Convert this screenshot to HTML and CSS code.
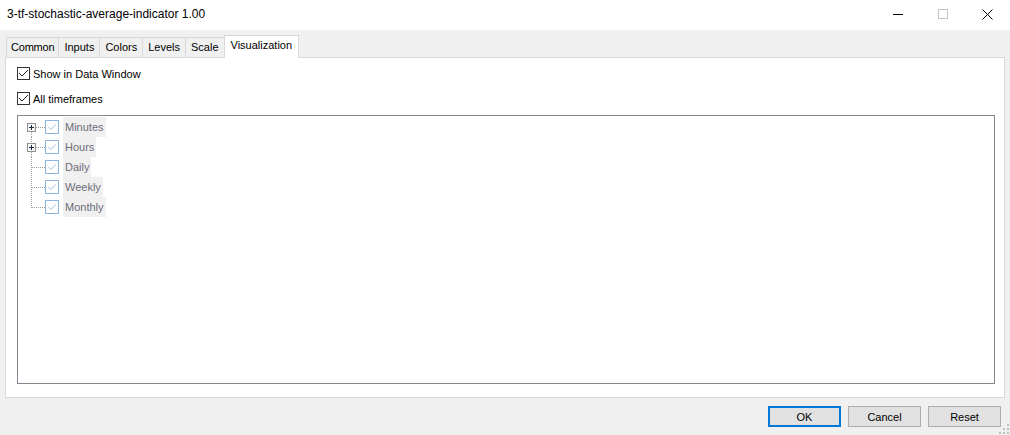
FILE: index.html
```html
<!DOCTYPE html>
<html>
  <head>
    <meta charset="UTF-8" />
    <title>3-tf-stochastic-average-indicator 1.00</title>
    <link rel="stylesheet" href="styles.css">
  </head>
  <body>
    <div class="window">
      <header class="titlebar">
        <span class="title">3-tf-stochastic-average-indicator 1.00</span>
        <div class="controls">
          <span class="ctl">
            <svg width="10" height="10" viewBox="0 0 10 10"><path d="M0 5.5H10" stroke="#000" /></svg>
          </span>
          <span class="ctl">
            <svg width="10" height="10" viewBox="0 0 10 10"><rect x="0.5" y="0.5" width="9" height="9" fill="none" stroke="#c4c4c4" /></svg>
          </span>
          <span class="ctl">
            <svg width="11" height="11" viewBox="0 0 11 11"><path d="M0.5 0.5L10.5 10.5M10.5 0.5L0.5 10.5" stroke="#000" stroke-width="1" /></svg>
          </span>
        </div>
      </header>

      <nav class="tabs">
        <div class="tab">Common</div>
        <div class="tab">Inputs</div>
        <div class="tab">Colors</div>
        <div class="tab">Levels</div>
        <div class="tab">Scale</div>
        <div class="tab active">Visualization</div>
      </nav>

      <section class="panel">
        <label class="check">
          <svg class="box" width="13" height="13" viewBox="0 0 13 13">
            <rect x="0.5" y="0.5" width="12" height="12" fill="#fff" stroke="#333" />
            <path d="M2.5 6.5L5 9L10.5 3.5" fill="none" stroke="#222" />
          </svg>
          Show in Data Window
        </label>
        <label class="check">
          <svg class="box" width="13" height="13" viewBox="0 0 13 13">
            <rect x="0.5" y="0.5" width="12" height="12" fill="#fff" stroke="#333" />
            <path d="M2.5 6.5L5 9L10.5 3.5" fill="none" stroke="#222" />
          </svg>
          All timeframes
        </label>

        <div class="tree">
          <!-- first two nodes can be expanded -->
          <div class="node">
            <svg class="branch" width="27" height="20" viewBox="0 0 27 20">
              <path d="M13.5 15V20" class="dots" />
              <path d="M18 10.5H27" class="dots" />
              <rect x="9.5" y="6.5" width="8" height="8" fill="#f7f7f7" stroke="#919191" />
              <path d="M11 10.5H16M13.5 8V13" stroke="#1b2a44" />
            </svg>
            <svg class="tick" width="14" height="14" viewBox="0 0 14 14">
              <rect x="0.5" y="0.5" width="13" height="13" fill="#fff" stroke="#8cb6e0" />
              <path d="M3.5 7L6 9.5L10.5 4.5" fill="none" stroke="#9fc2e6" />
            </svg>
            <span class="name">Minutes</span>
          </div>
          <div class="node">
            <svg class="branch" width="27" height="20" viewBox="0 0 27 20">
              <path d="M13.5 0V6M13.5 15V20" class="dots" />
              <path d="M18 10.5H27" class="dots" />
              <rect x="9.5" y="6.5" width="8" height="8" fill="#f7f7f7" stroke="#919191" />
              <path d="M11 10.5H16M13.5 8V13" stroke="#1b2a44" />
            </svg>
            <svg class="tick" width="14" height="14" viewBox="0 0 14 14">
              <rect x="0.5" y="0.5" width="13" height="13" fill="#fff" stroke="#8cb6e0" />
              <path d="M3.5 7L6 9.5L10.5 4.5" fill="none" stroke="#9fc2e6" />
            </svg>
            <span class="name">Hours</span>
          </div>
          <div class="node">
            <svg class="branch" width="27" height="20" viewBox="0 0 27 20">
              <path d="M13.5 0V20" class="dots" />
              <path d="M14 10.5H27" class="dots" />
            </svg>
            <svg class="tick" width="14" height="14" viewBox="0 0 14 14">
              <rect x="0.5" y="0.5" width="13" height="13" fill="#fff" stroke="#8cb6e0" />
              <path d="M3.5 7L6 9.5L10.5 4.5" fill="none" stroke="#9fc2e6" />
            </svg>
            <span class="name">Daily</span>
          </div>
          <div class="node">
            <svg class="branch" width="27" height="20" viewBox="0 0 27 20">
              <path d="M13.5 0V20" class="dots" />
              <path d="M14 10.5H27" class="dots" />
            </svg>
            <svg class="tick" width="14" height="14" viewBox="0 0 14 14">
              <rect x="0.5" y="0.5" width="13" height="13" fill="#fff" stroke="#8cb6e0" />
              <path d="M3.5 7L6 9.5L10.5 4.5" fill="none" stroke="#9fc2e6" />
            </svg>
            <span class="name">Weekly</span>
          </div>
          <div class="node">
            <svg class="branch" width="27" height="20" viewBox="0 0 27 20">
              <path d="M13.5 0V11" class="dots" />
              <path d="M14 10.5H27" class="dots" />
            </svg>
            <svg class="tick" width="14" height="14" viewBox="0 0 14 14">
              <rect x="0.5" y="0.5" width="13" height="13" fill="#fff" stroke="#8cb6e0" />
              <path d="M3.5 7L6 9.5L10.5 4.5" fill="none" stroke="#9fc2e6" />
            </svg>
            <span class="name">Monthly</span>
          </div>
        </div>
      </section>

      <footer class="buttons">
        <button class="btn default">OK</button>
        <button class="btn">Cancel</button>
        <button class="btn">Reset</button>
      </footer>

      <!-- resize grip -->
      <svg class="grip" width="10" height="10" viewBox="0 0 10 10">
        <rect x="8" y="0" width="2" height="2" />
        <rect x="8" y="4" width="2" height="2" />
        <rect x="4" y="4" width="2" height="2" />
        <rect x="8" y="8" width="2" height="2" />
        <rect x="4" y="8" width="2" height="2" />
        <rect x="0" y="8" width="2" height="2" />
      </svg>
    </div>
  </body>
</html>
```

FILE: styles.css
```css
body {
  margin: 0;
  background: #f0f0f0;
  font-family: "Liberation Sans", Arial, sans-serif;
  font-size: 11px;
  color: #000;
}
.window {
  position: relative;
  width: 1010px;
  height: 435px;
  display: flex;
  flex-direction: column;
  overflow: hidden;
}
.titlebar {
  height: 30px;
  flex: none;
  background: #fff;
  display: flex;
  align-items: center;
  justify-content: space-between;
  padding-left: 7px;
  box-sizing: border-box;
}
.title {
  font-size: 12px;
  padding-bottom: 2px;
}
.controls {
  display: flex;
  height: 100%;
}
.ctl {
  width: 45px;
  display: flex;
  align-items: center;
  justify-content: center;
  padding-bottom: 2px;
}
.ctl svg {
  shape-rendering: crispEdges;
}
.ctl:last-child svg {
  shape-rendering: auto;
}

.tabs {
  flex: none;
  height: 22px;
  margin-top: 5px;
  padding-left: 6px;
  display: flex;
  align-items: flex-end;
}
.tab {
  height: 20px;
  box-sizing: border-box;
  padding: 0 5px;
  border: 1px solid #d9d9d9;
  border-bottom: none;
  margin-right: -1px;
  line-height: 19px;
  background: #f0f0f0;
}
.tab:first-child {
  padding: 0 4px;
  letter-spacing: -0.2px;
}
.tab.active {
  position: relative;
  z-index: 1;
  height: 23px;
  margin-bottom: -1px;
  padding: 0 6px;
  line-height: 19px;
  background: #fff;
}

.panel {
  flex: 1;
  margin: 0 5px;
  border: 1px solid #d9d9d9;
  background: #fff;
  padding: 9px 9px 13px 11px;
  display: flex;
  flex-direction: column;
  gap: 12px;
}
.check {
  display: flex;
  align-items: center;
  gap: 3px;
  height: 13px;
}
.box {
  flex: none;
  shape-rendering: crispEdges;
}
.tree {
  flex: 1;
  margin-top: -2px;
  border: 1px solid #828790;
  padding-top: 1px;
}
.node {
  display: flex;
  align-items: center;
  height: 20px;
}
.branch {
  flex: none;
  shape-rendering: crispEdges;
}
.dots {
  stroke: #a0a0a0;
  stroke-dasharray: 1 1;
  fill: none;
}
.tick {
  flex: none;
}
.tick rect {
  shape-rendering: crispEdges;
}
.name {
  margin-left: 4px;
  height: 20px;
  line-height: 20px;
  padding: 0 2px;
  background: #f0f0f0;
  color: #6d6d78;
}

.buttons {
  flex: none;
  height: 37px;
  box-sizing: border-box;
  padding: 8px 9px 0 0;
  display: flex;
  justify-content: flex-end;
  align-items: flex-start;
  gap: 7px;
}
.btn {
  width: 73px;
  height: 21px;
  background: #e1e1e1;
  border: 1px solid #adadad;
  font-family: inherit;
  font-size: 11px;
  color: #000;
  padding: 0;
}
.btn.default {
  border: 2px solid #0078d7;
}
.grip {
  position: absolute;
  right: 1px;
  bottom: 1px;
  fill: #bfbfbf;
}
```
